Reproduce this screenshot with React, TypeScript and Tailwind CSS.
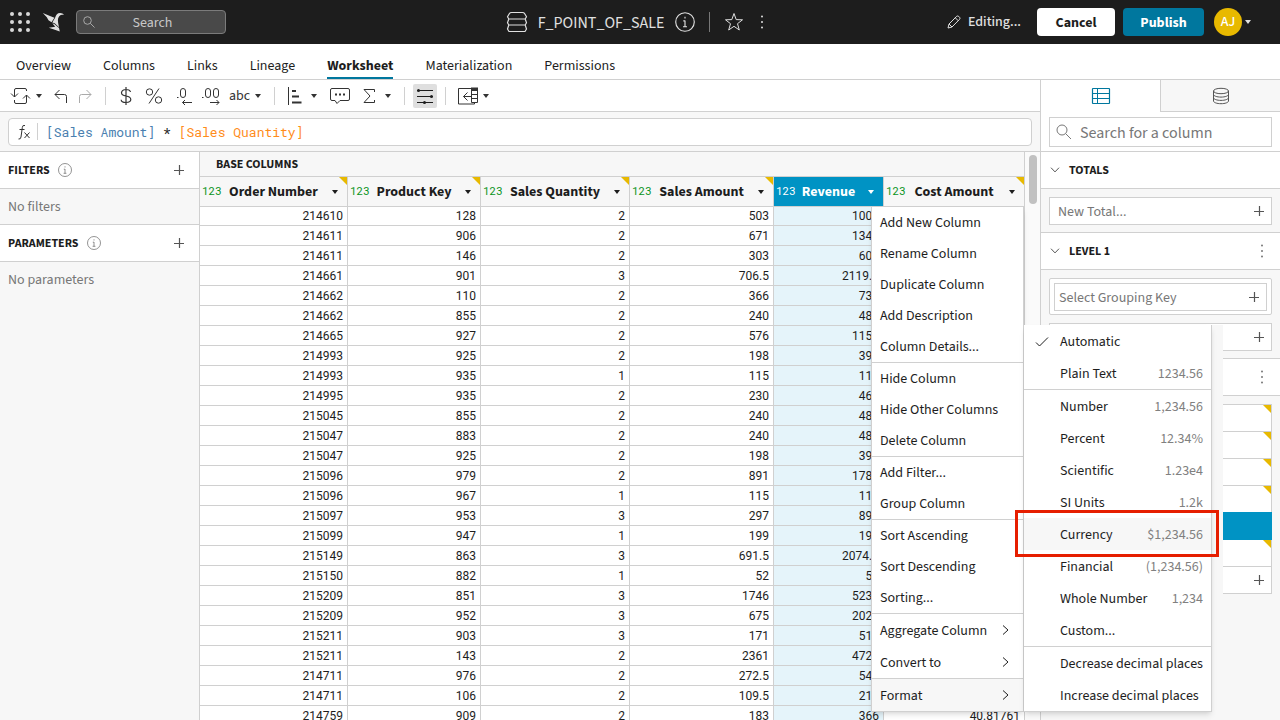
import React from "react";
import clsx from "clsx";

const columns = [
  { name: "Order Number", width: "w-[148px]" },
  { name: "Product Key", width: "w-[133px]" },
  { name: "Sales Quantity", width: "w-[149px]" },
  { name: "Sales Amount", width: "w-36" },
  { name: "Revenue", width: "w-[110px]", active: true },
  { name: "Cost Amount", width: "w-[141px]" },
];

// order number, product key, quantity, amount
const orders = [
  [214610, 128, 2, 503],
  [214611, 906, 2, 671],
  [214611, 146, 2, 303],
  [214661, 901, 3, 706.5],
  [214662, 110, 2, 366],
  [214662, 855, 2, 240],
  [214665, 927, 2, 576],
  [214993, 925, 2, 198],
  [214993, 935, 1, 115],
  [214995, 935, 2, 230],
  [215045, 855, 2, 240],
  [215047, 883, 2, 240],
  [215047, 925, 2, 198],
  [215096, 979, 2, 891],
  [215096, 967, 1, 115],
  [215097, 953, 3, 297],
  [215099, 947, 1, 199],
  [215149, 863, 3, 691.5],
  [215150, 882, 1, 52],
  [215209, 851, 3, 1746],
  [215209, 952, 3, 675],
  [215211, 903, 3, 171],
  [215211, 143, 2, 2361],
  [214711, 976, 2, 272.5],
  [214711, 106, 2, 109.5],
  [214759, 909, 2, 183, 40.81761],
];

const columnMenu = [
  ["Add New Column", "Rename Column", "Duplicate Column", "Add Description", "Column Details..."],
  ["Hide Column", "Hide Other Columns", "Delete Column"],
  ["Add Filter...", "Group Column"],
  ["Sort Ascending", "Sort Descending", "Sorting..."],
  ["Aggregate Column", "Convert to"],
  ["Format"],
];
const withSubmenu = ["Aggregate Column", "Convert to", "Format"];

const formatMenu = [
  [
    ["Automatic", ""],
    ["Plain Text", "1234.56"],
  ],
  [
    ["Number", "1,234.56"],
    ["Percent", "12.34%"],
    ["Scientific", "1.23e4"],
    ["SI Units", "1.2k"],
    ["Currency", "$1,234.56"],
    ["Financial", "(1,234.56)"],
    ["Whole Number", "1,234"],
    ["Custom...", ""],
  ],
  [
    ["Decrease decimal places", ""],
    ["Increase decimal places", ""],
  ],
];

const tabs = ["Overview", "Columns", "Links", "Lineage", "Worksheet", "Materialization", "Permissions"];

type IconProps = {
  w?: number;
  h?: number;
  className?: string;
  children: React.ReactNode;
};

function Icon({ w = 20, h = 20, className, children }: IconProps) {
  return (
    <svg
      width={w}
      height={h}
      viewBox={`0 0 ${w} ${h}`}
      fill="none"
      stroke="currentColor"
      strokeWidth={1}
      className={clsx("shrink-0", className)}
      aria-hidden="true"
    >
      {children}
    </svg>
  );
}

function Caret({ className }: { className?: string }) {
  return (
    <Icon w={8} h={6} className={className}>
      <path d="M1 1h6L4 5z" fill="currentColor" stroke="none" />
    </Icon>
  );
}

function Plus() {
  return (
    <Icon w={12} h={12} className="text-[#555]">
      <path d="M1 6.5h10M6.5 1v10" strokeWidth={1.2} />
    </Icon>
  );
}

function Info({ size = 14 }: { size?: number }) {
  return (
    <svg
      width={size}
      height={size}
      viewBox="0 0 14 14"
      fill="none"
      stroke="currentColor"
      strokeWidth={0.8}
      className="shrink-0"
      aria-hidden="true"
    >
      <circle cx="7" cy="7" r="6.5" />
      <path d="M7 6v4.4M5.8 6.2H7M5.6 10.3h2.8M7 3.3v1.2" />
    </svg>
  );
}

function MoreDots({ className }: { className?: string }) {
  return (
    <Icon w={4} h={16} className={className}>
      <g fill="currentColor" stroke="none">
        <circle cx="2" cy="2.5" r="1" />
        <circle cx="2" cy="8" r="1" />
        <circle cx="2" cy="13.5" r="1" />
      </g>
    </Icon>
  );
}

function Chevron() {
  return (
    <Icon w={10} h={6} className="text-[#555]">
      <path d="M1 0.7 5 4.9 9 0.7" />
    </Icon>
  );
}

function Magnifier({ className }: { className?: string }) {
  return (
    <Icon w={16} h={16} className={className}>
      <circle cx="6" cy="6" r="5" />
      <path d="m9.7 9.7 5.3 5.3" />
    </Icon>
  );
}

function Separator() {
  return <div className="h-[18px] w-px bg-[#d0d0d0]" />;
}

function Corner() {
  return (
    <svg width="8" height="8" viewBox="0 0 8 8" className="absolute top-0 right-0" aria-hidden="true">
      <path d="M0 0h8v8z" fill="#e8b900" />
    </svg>
  );
}

function TopBar() {
  return (
    <header className="flex h-11 shrink-0 items-center bg-[#1d1d1d] text-[#e0e0e0]">
      <div className="flex flex-1 items-center pl-[10px]">
        <button aria-label="Apps">
          <Icon w={20} h={20}>
            <g fill="#d8d8d8" stroke="none">
              {[2, 10, 18].map((y) =>
                [2, 10, 18].map((x) => <circle key={`${x}-${y}`} cx={x} cy={y} r="2" />)
              )}
            </g>
          </Icon>
        </button>
        <a href="#" aria-label="Home" className="ml-3">
          <Icon w={22} h={20}>
            <g fill="#e0e0e0" stroke="none">
              <path d="M0.8 1 8.6 4.300 12.400 5.800 9.500 10.300 6.500 8.300 4.800 5.300z" />
              <path d="M13 6C14.200 2.800 15.300 1.200 18 1.100 20 1.100 21.300 2 22 3.100 20.300 2.500 19.300 2.500 18.300 3.200 16.700 4.500 15.900 6 15.900 8.300 16 11.300 16.600 13 17 15.300L12.700 11.300 10.300 10.600z" />
              <path d="M10.300 11.200 12.400 12 17 16 17.800 19.600 12.800 17.700 6.800 15.700 13.200 14.800z" />
            </g>
          </Icon>
        </a>
        <div className="relative ml-3 flex items-center">
          <Icon w={12} h={12} className="absolute left-[7px] text-[#a8a8a8]">
            <circle cx="4.5" cy="4.5" r="3.8" />
            <path d="m7.3 7.3 4.2 4.2" />
          </Icon>
          <input
            aria-label="Search"
            placeholder="Search"
            className="h-6 w-[150px] rounded border border-[#7b7b7b] bg-[#494949] pt-px pr-px pl-1 text-center text-[14px] leading-5 placeholder:text-[#c8c8c8]"
          />
        </div>
      </div>

      <div className="flex items-center pl-2">
        <Icon w={22} h={22}>
          <path
            d="M5.500 1.500h11q1.500 0 2.200 1.200l1.800 3-1.300 2.300H2.800L1.500 5.700l1.800-3Q4 1.500 5.500 1.500zM2.800 8 1.500 11.700l1.300 2.300h16.400l1.300-2.300L19.200 8M2.800 14 1.500 18l1.500 2.500h16l1.500-2.500-1.300-4"
            strokeWidth={1.2}
            strokeLinejoin="round"
          />
        </Icon>
        <h1 className="ml-[10px] pt-[2px] text-[16px] leading-5">F_POINT_OF_SALE</h1>
        <button aria-label="Details" className="ml-[11px]">
          <Info size={20} />
        </button>
        <div className="mx-[14px] h-5 w-px bg-[#777]" />
        <button aria-label="Favorite">
          <Icon w={20} h={20}>
            <path d="m10 1.5 2.2 6.1 6.3.2-5 3.9 1.8 6.3-5.3-3.7L4.7 18l1.8-6.3-5-3.9 6.3-.2z" />
          </Icon>
        </button>
        <button aria-label="More" className="ml-4">
          <MoreDots />
        </button>
      </div>

      <div className="flex flex-1 items-center justify-end pr-7">
        <Icon w={14} h={14}>
          <path d="m1 13 1-4L9.7 1.3q1-.7 2 .1l.9.9q.8 1 0 2L5 12zM8.3 2.8l3 3M2 9l3 3" />
        </Icon>
        <span className="ml-[7px] text-[14px] font-medium">Editing...</span>
        <button className="ml-4 h-7 w-[78px] rounded bg-white pt-[2px] text-[14px] font-bold text-[#1d1d1d]">
          Cancel
        </button>
        <button className="ml-2 h-7 w-[81px] rounded bg-[#00779e] pt-[2px] text-[14px] font-bold text-white">
          Publish
        </button>
        <button className="ml-[10px] flex items-center gap-[2px]">
          <span className="flex h-7 w-7 items-center justify-center rounded-full bg-[#e8b900] pt-px text-[14px] font-medium text-white">
            AJ
          </span>
          <Caret />
        </button>
      </div>
    </header>
  );
}

function Toolbar() {
  return (
    <div className="flex h-8 shrink-0 items-center border-b border-[#d0d0d0] pl-[10px] text-[#333]">
      <button aria-label="Refresh" className="flex items-center gap-1">
        <Icon w={21} h={18}>
          <path d="M4.5 10V3Q4.5 1.5 6 1.5H15Q16.5 1.5 16.5 3V4M1 6.5 4.5 10 8 6.5M13 11.5 16.5 8 20 11.5M16.5 8V15Q16.5 16.5 15 16.5H6Q4.5 16.5 4.5 15V13" />
        </Icon>
        <Caret />
      </button>
      <button aria-label="Undo" className="ml-[11px]">
        <Icon w={14} h={16}>
          <path d="M5.5 2 1 6.5 5.5 11M1 6.5h9.5q2 0 2 2V15" />
        </Icon>
      </button>
      <button aria-label="Redo" className="ml-[10px] text-[#aaa]">
        <Icon w={14} h={16}>
          <path d="M8.5 2 13 6.5 8.5 11M13 6.5H3.5q-2 0-2 2V15" />
        </Icon>
      </button>
      <div className="mr-[14px] ml-[13px]">
        <Separator />
      </div>
      <button aria-label="Currency">
        <Icon w={12} h={18}>
          <path
            d="M6 0v18M10.5 5Q10 2.5 6 2.5T1.5 5.7Q1.5 8.3 6 9T10.8 12.3Q10.8 15.5 6 15.5T1.2 12.7"
            strokeWidth={1.2}
          />
        </Icon>
      </button>
      <button aria-label="Percent" className="ml-[13px]">
        <Icon w={18} h={18}>
          <circle cx="4.5" cy="5" r="3.2" />
          <circle cx="13.5" cy="13" r="3.2" />
          <path d="M14 1.5 4 16.5" />
        </Icon>
      </button>
      <button aria-label="Decrease decimals" className="ml-[13px]">
        <Icon w={17} h={18}>
          <rect x="4.5" y="1.5" width="5" height="9" rx="2.5" />
          <path d="M1 10.5h1.5M16 15.5H6.5M9 13l-2.5 2.5L9 18" />
        </Icon>
      </button>
      <button aria-label="Increase decimals" className="ml-2">
        <Icon w={19} h={18}>
          <rect x="4.5" y="1.5" width="5" height="9" rx="2.5" />
          <rect x="12.5" y="1.5" width="5" height="9" rx="2.5" />
          <path d="M1 10.5h1.5M9 15.5h9M15.5 13l2.5 2.5-2.5 2.5" />
        </Icon>
      </button>
      <button className="ml-[9px] flex items-center gap-1 text-[14px] leading-5">
        abc
        <Caret />
      </button>
      <div className="mx-3">
        <Separator />
      </div>
      <button aria-label="Chart" className="flex items-center gap-2">
        <Icon w={15} h={20}>
          <path d="M1.5 1v18" />
          <path d="M5 5h4M5 10.5h7M5 16.5h9.5" strokeWidth={2.2} />
        </Icon>
        <Caret />
      </button>
      <button aria-label="Comment" className="ml-3">
        <Icon w={20} h={18}>
          <path d="M2 1.5h16q1.5 0 1.5 1.5v9q0 1.5-1.5 1.500H10l-3 3-2-3H2Q.5 13.5.5 12V3Q.5 1.5 2 1.5z" />
          <path d="M5 6.500h2v2H5zM9 6.500h2v2H9zM13 6.500h2v2h-2z" fill="currentColor" stroke="none" />
        </Icon>
      </button>
      <button aria-label="Totals" className="ml-[13px] flex items-center gap-[9px]">
        <Icon w={12} h={16}>
          <path d="M11.5 4V1.5H1L7 8l-6 6.500h10.5V12" />
        </Icon>
        <Caret />
      </button>
      <div className="ml-3">
        <Separator />
      </div>
      <button
        aria-label="Column settings"
        className="ml-2 flex h-6 w-6 items-center justify-center rounded-xs bg-[#dfdfdf] text-[#1d1d1d]"
      >
        <Icon w={16} h={16}>
          <path d="M0 2.5h16M0 8.5h16M0 14.5h16" />
          <g fill="currentColor" stroke="none">
            <circle cx="1.5" cy="2.5" r="1.5" />
            <circle cx="14.5" cy="8.5" r="1.5" />
            <circle cx="7.5" cy="14.5" r="1.5" />
          </g>
        </Icon>
      </button>
      <div className="mr-3 ml-2">
        <Separator />
      </div>
      <button aria-label="Add columns" className="flex items-center gap-1">
        <Icon w={20} h={18}>
          <path d="M13.5 1.5H.5v15.500h16v-2M13.5 1v14.500h6V1M13.5 7.5h6M13.5 11.5h6" />
          <path d="M13 .5h7V4h-7z" fill="currentColor" stroke="none" />
          <path d="M13 9.500H5.500M9.500 5.500l-4 4 4 4" />
        </Icon>
        <Caret />
      </button>
    </div>
  );
}

function FormulaBar() {
  return (
    <div className="flex h-10 shrink-0 items-center border-b border-[#d0d0d0] bg-[#f7f7f7] px-2">
      <div className="flex h-7 flex-1 items-center rounded border border-[#d0d0d0] bg-white">
        <Icon w={14} h={16} className="ml-2 text-[#333]">
          <path d="M8 1.5Q5.500.7 5.300 3.500L4 13q-.4 2.500-2.500 2M2.500 5.500h5M7.500 8.500l5 5.500M12.500 8.500l-5 5.500" />
        </Icon>
        <div className="mr-2 ml-[6px] h-[17px] w-px bg-[#d0d0d0]" />
        <code className="pt-[2px] font-['Roboto_Mono','Liberation_Mono',monospace] text-[13px] whitespace-pre text-[#222]">
          <span className="text-[#4a7fb0]">[Sales Amount]</span> *{" "}
          <span className="text-[#ff8c1a]">[Sales Quantity]</span>
        </code>
      </div>
    </div>
  );
}

function SideSection({ title, empty, last }: { title: string; empty: string; last?: boolean }) {
  return (
    <section>
      <div className="flex h-[37px] items-center border-b border-[#d0d0d0] bg-white pr-[14px] pl-2">
        <h2 className="pt-[2px] text-[12px] font-bold">{title}</h2>
        <button aria-label={`About ${title.toLowerCase()}`} className="ml-2 text-[#777]">
          <Info />
        </button>
        <button aria-label={`Add to ${title.toLowerCase()}`} className="ml-auto">
          <Plus />
        </button>
      </div>
      <p
        className={clsx(
          "flex h-9 items-center px-2 pt-px text-[14px] text-[#777]",
          !last && "border-b border-[#d0d0d0]"
        )}
      >
        {empty}
      </p>
    </section>
  );
}

function DataGrid() {
  return (
    <div className="flex min-w-0 flex-1 overflow-hidden">
      <div className="min-w-0 flex-1 overflow-hidden">
        <div className="flex h-[25px] items-center border-r border-b border-[#d0d0d0] bg-[#f7f7f7] pt-[2px] pl-4 text-[12px] font-bold">
          BASE COLUMNS
        </div>
        <table className="w-[825px] table-fixed border-separate border-spacing-0">
          <thead>
            <tr>
              {columns.map((col) => (
                <th
                  key={col.name}
                  className={clsx(
                    "relative h-[30px] border-r border-b border-[#d0d0d0] p-0",
                    col.width,
                    col.active ? "bg-[#0093c4] text-white" : "bg-[#f7f7f7]"
                  )}
                >
                  <div className="flex items-center">
                    <span
                      className={clsx(
                        "w-6 pl-[2px] text-left font-['Roboto_Mono','Liberation_Mono',monospace] text-[11px] font-normal",
                        col.active ? "text-white" : "text-[#0b9423]"
                      )}
                    >
                      123
                    </span>
                    <span className="flex-1 text-center text-[14px] leading-5 whitespace-nowrap">
                      {col.name}
                    </span>
                    <button aria-label={`${col.name} menu`} className="flex w-6 justify-center px-2">
                      <Caret />
                    </button>
                  </div>
                  {!col.active && <Corner />}
                </th>
              ))}
            </tr>
          </thead>
          <tbody className="font-[Roboto,sans-serif] text-[12px] leading-[18px]">
            {orders.map(([order, key, qty, amount, cost], i) => (
              <tr key={i}>
                {[order, key, qty, amount, qty * amount, cost].map((value, j) => (
                  <td
                    key={j}
                    className={clsx(
                      "border-r border-b border-[#d0d0d0] pr-1 pb-0 text-right",
                      i === 0 ? "pt-0" : "pt-px",
                      j === 4 && "bg-[#e5f4fa]"
                    )}
                  >
                    {value}
                  </td>
                ))}
              </tr>
            ))}
          </tbody>
        </table>
      </div>
      <div className="w-[15px] shrink-0 bg-[#fafafa] pt-[3px] pl-1">
        <div className="h-[49px] w-2 rounded bg-[#c1c1c1]" />
      </div>
    </div>
  );
}

function PanelHeader({ title, more }: { title: string; more?: boolean }) {
  return (
    <div className="flex h-[38px] items-center border-y border-[#d0d0d0] bg-white pr-4 pl-[9px]">
      <Chevron />
      <h2 className="ml-[9px] pt-[2px] text-[12px] font-bold">{title}</h2>
      {more && (
        <button aria-label="More" className="ml-auto text-[#777]">
          <MoreDots />
        </button>
      )}
    </div>
  );
}

function AddBox({ label }: { label?: string }) {
  return (
    <button
      aria-label={label ?? "Add"}
      className="flex h-7 w-full items-center justify-between border border-[#d0d0d0] bg-white pr-[6px] pl-2 text-[14px] text-[#777]"
    >
      <span className="pt-[2px]">{label}</span>
      <Plus />
    </button>
  );
}

function ColumnPanel() {
  return (
    <aside className="w-60 shrink-0 border-l border-[#d0d0d0] bg-[#f7f7f7]">
      <div className="flex h-8">
        <button aria-label="Table columns" className="flex flex-1 items-center justify-center bg-white text-[#00779e]">
          <Icon w={20} h={18}>
            <rect x="1.5" y="1.5" width="17" height="15" rx="0.5" strokeWidth={1.2} />
            <path d="M6.5 1.5v15M1.5 6.5h17M1.5 11.5h17" />
          </Icon>
        </button>
        <button
          aria-label="Data source"
          className="flex flex-1 items-center justify-center border-b border-l border-[#d0d0d0] text-[#555]"
        >
          <Icon w={18} h={18}>
            <ellipse cx="9" cy="4" rx="7.5" ry="2.7" />
            <path d="M1.5 4v10c0 1.5 3.4 2.7 7.5 2.7s7.5-1.2 7.5-2.7V4M1.5 7.4c0 1.5 3.4 2.7 7.5 2.7s7.5-1.2 7.5-2.7M1.5 10.7c0 1.5 3.4 2.7 7.5 2.7s7.5-1.2 7.5-2.7" />
          </Icon>
        </button>
      </div>
      <div className="relative h-[39px] bg-white px-2 pt-[5px]">
        <Magnifier className="absolute top-3 left-[15px] text-[#777]" />
        <input
          aria-label="Search for a column"
          placeholder="Search for a column"
          className="h-[30px] w-full border border-[#d0d0d0] bg-transparent pt-[2px] pl-[30px] text-[16px] leading-6 placeholder:text-[#777]"
        />
      </div>

      <PanelHeader title="TOTALS" />
      <div className="px-2 pt-2 pb-[7px]">
        <AddBox label="New Total..." />
      </div>

      <PanelHeader title="LEVEL 1" more />
      <div className="flex flex-col gap-2 px-2 pt-2 pb-[7px]">
        <div className="rounded-xs border border-[#d0d0d0] bg-white p-1 pb-[3px]">
          <button className="flex h-7 w-full items-center justify-between border border-[#d0d0d0] pr-[6px] pl-1 text-[14px] text-[#777]">
            <span className="pt-[2px]">Select Grouping Key</span>
            <Plus />
          </button>
        </div>
        <AddBox />
      </div>

      <PanelHeader title="" more />
      <div className="px-2 pt-2">
        <div className="border-x border-t border-[#d0d0d0] bg-white">
          {columns.map((col) => (
            <div
              key={col.name}
              className={clsx(
                "relative",
                col.active ? "-mx-px -mt-px h-7 bg-[#0093c4]" : "h-[27px] border-b border-[#d0d0d0]"
              )}
            >
              {!col.active && <Corner />}
            </div>
          ))}
        </div>
        <div className="flex h-[27px] items-center justify-end border border-t-0 border-[#d0d0d0] bg-white pr-[6px]">
          <Plus />
        </div>
      </div>
    </aside>
  );
}

function ColumnMenu() {
  return (
    <div
      role="menu"
      className="absolute top-[207px] left-[871px] w-[153px] border-x border-b border-[#d0d0d0] bg-white shadow-md"
    >
      {columnMenu.map((group, i) => (
        <div key={i} className={clsx(i > 0 && "border-t border-[#d0d0d0]")}>
          {group.map((item) => {
            const nested = withSubmenu.includes(item);
            return (
              <button
                key={item}
                role="menuitem"
                className={clsx(
                  "flex w-full items-center justify-between pr-[14px] pl-2 text-[14px] whitespace-nowrap",
                  nested ? "h-8" : "h-[31px]",
                  item === "Format" && "bg-[#f7f7f7]"
                )}
              >
                <span className="pt-[2px]">{item}</span>
                {nested && (
                  <Icon w={7} h={12}>
                    <path d="M1 1.5 6 6l-5 4.5" />
                  </Icon>
                )}
              </button>
            );
          })}
        </div>
      ))}
    </div>
  );
}

function FormatMenu() {
  return (
    <div className="absolute top-[325px] left-[1024px] w-[199px] bg-[#f7f7f7]">
      <div role="menu" className="w-[188px] border-r border-b border-[#d0d0d0] bg-white shadow-md">
        {formatMenu.map((group, i) => (
          <div key={i} className={clsx(i > 0 && "border-t border-[#d0d0d0]")}>
            {group.map(([label, sample]) => (
              <button
                key={label}
                role="menuitem"
                className={clsx(
                  "flex h-8 w-full items-center pt-[3px] pr-2 text-[14px] whitespace-nowrap",
                  label === "Currency" && "bg-[#f7f7f7]"
                )}
              >
                <span className="flex w-9 shrink-0 justify-center">
                  {label === "Automatic" && (
                    <Icon w={14} h={12}>
                      <path d="M1 5.5 4.5 9 13 0.5" />
                    </Icon>
                  )}
                </span>
                {label}
                <span className="ml-auto text-[#808080]">{sample}</span>
              </button>
            ))}
          </div>
        ))}
      </div>
      {/* highlight around the Currency entry */}
      <div className="absolute top-[185px] -left-[9px] h-[47px] w-[204px] border-3 border-[#e61e00]" />
    </div>
  );
}

export default function App() {
  return (
    <div className="relative flex h-screen flex-col overflow-hidden bg-white font-['Source_Sans_3','Noto_Sans_CJK_SC',sans-serif] text-[#1d1d1d]">
      <TopBar />
      <nav className="flex h-9 shrink-0 items-end gap-8 border-b border-[#d0d0d0] px-4">
        {tabs.map((tab) => (
          <a
            key={tab}
            href="#"
            className={clsx(
              "border-b-2 pb-px text-[14px] leading-5",
              tab === "Worksheet" ? "border-[#00779e] font-bold" : "border-transparent"
            )}
          >
            {tab}
          </a>
        ))}
      </nav>

      <div className="flex min-h-0 flex-1">
        <main className="flex min-w-0 flex-1 flex-col">
          <Toolbar />
          <FormulaBar />
          <div className="flex min-h-0 flex-1">
            <div className="w-[200px] shrink-0 border-r border-[#d0d0d0] bg-[#f7f7f7]">
              <SideSection title="FILTERS" empty="No filters" />
              <SideSection title="PARAMETERS" empty="No parameters" last />
            </div>
            <DataGrid />
          </div>
        </main>
        <ColumnPanel />
      </div>

      <ColumnMenu />
      <FormatMenu />
    </div>
  );
}
